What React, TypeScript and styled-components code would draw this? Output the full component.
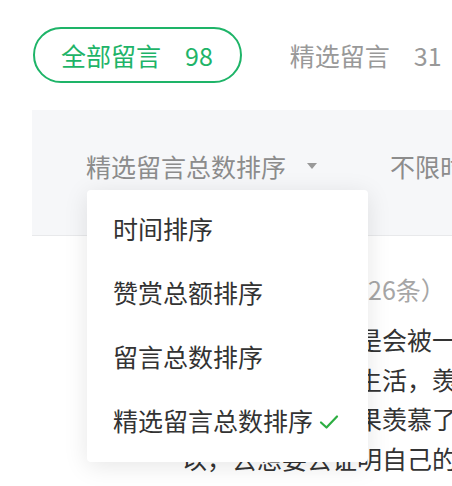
import React, { useState } from 'react'
import styled, { createGlobalStyle } from 'styled-components'

const GlobalStyle = createGlobalStyle`
	html, body {
		margin: 0;
		padding: 0;
		background: #fff;
		overflow: hidden;
	}
	body {
		font-family: "Noto Sans CJK SC", "Noto Sans", sans-serif;
	}
`

const sortOptions = ['时间排序', '赞赏总额排序', '留言总数排序', '精选留言总数排序']

const commentLines = [
	'其实，我们也总是会被一',
	'些人光鲜亮丽的生活，羡',
	'慕他们。但是如果羡慕了',
	'以，去想要去证明自己的',
]

function App() {
	const [tab, setTab] = useState(0)
	const [sort, setSort] = useState(3)

	return (
		<Page>
			<GlobalStyle />
			<Tabs>
				<Tab active={tab === 0} onClick={() => setTab(0)}>
					全部留言<Count>98</Count>
				</Tab>
				<Tab active={tab === 1} onClick={() => setTab(1)}>
					精选留言<Count>31</Count>
				</Tab>
			</Tabs>

			<FilterBar>
				<FilterItem>
					{sortOptions[sort]}
					<Arrow />
				</FilterItem>
				<Divider />
				<FilterItem>不限时间</FilterItem>
			</FilterBar>

			<Content>
				<SectionTitle>精选读者留言（26条）</SectionTitle>
				<CommentText>
					{commentLines.map(line => (
						<Line key={line}>{line}</Line>
					))}
				</CommentText>
			</Content>

			<Dropdown>
				{sortOptions.map((opt, i) => (
					<Option key={opt} onClick={() => setSort(i)}>
						{opt}
						{sort === i && (
							<Check viewBox="0 0 20 16">
								<path d="M2 8.5 L7.5 13.5 L18 2.5" fill="none" stroke="#2dae42" strokeWidth="2.2" strokeLinecap="round" strokeLinejoin="round" />
							</Check>
						)}
					</Option>
				))}
			</Dropdown>
		</Page>
	)
}

export default App

//#region styles
const Page = styled.div`
	position: relative;
	width: 452px;
	height: 486px;
	overflow: hidden;
`

const Tabs = styled.div`
	display: flex;
	align-items: center;
	gap: 20px;
	width: max-content;
	padding: 27px 0 0 33px;
`

const Tab = styled.div<{ active?: boolean }>`
	display: flex;
	flex-shrink: 0;
	align-items: center;
	box-sizing: border-box;
	height: 56px;
	padding: 0 27px 0 26px;
	border: 2px solid ${p => (p.active ? '#1eb468' : 'transparent')};
	border-radius: 28px;
	font-size: 25px;
	color: ${p => (p.active ? '#1eb468' : '#999')};
	white-space: nowrap;
	cursor: pointer;
`

const Count = styled.span`
	margin-left: 24px;
`

const FilterBar = styled.div`
	display: flex;
	align-items: flex-start;
	box-sizing: border-box;
	height: 126px;
	margin: 27px 0 0 32px;
	padding: 38px 0 0 54px;
	background: #f6f7f9;
	border-bottom: 1px solid #e8e9eb;
`

const FilterItem = styled.div`
	display: flex;
	align-items: center;
	height: 36px;
	font-size: 25px;
	color: #8c8c8c;
	white-space: nowrap;
`

const Arrow = styled.span`
	width: 0;
	height: 0;
	margin-left: 21px;
	border-left: 5px solid transparent;
	border-right: 5px solid transparent;
	border-top: 6px solid #999;
`

const Divider = styled.div`
	width: 2px;
	height: 36px;
	margin: 2px 36px 0 37px;
	background: #e3e4e6;
`

const Content = styled.div`
	padding-top: 35px;
`

const SectionTitle = styled.div`
	margin-left: 193px;
	font-size: 25px;
	line-height: 36px;
	color: #a6a6a6;
	white-space: nowrap;
`

const CommentText = styled.div`
	margin: 13px 0 0 182px;
	font-size: 25px;
	line-height: 39.5px;
	color: #333;
`

const Line = styled.div`
	white-space: nowrap;
`

const Dropdown = styled.div`
	position: absolute;
	top: 190px;
	left: 87px;
	width: 281px;
	box-sizing: border-box;
	padding: 6px 0 10px;
	background: #fff;
	border-radius: 4px;
	box-shadow: 0 4px 24px rgba(0, 0, 0, 0.1);
`

const Option = styled.div`
	display: flex;
	align-items: center;
	height: 64px;
	padding-left: 26px;
	font-size: 25px;
	color: #333;
	cursor: pointer;
`

const Check = styled.svg`
	width: 20px;
	height: 16px;
	margin-left: 6px;
	margin-top: 4px;
`
//#endregion
